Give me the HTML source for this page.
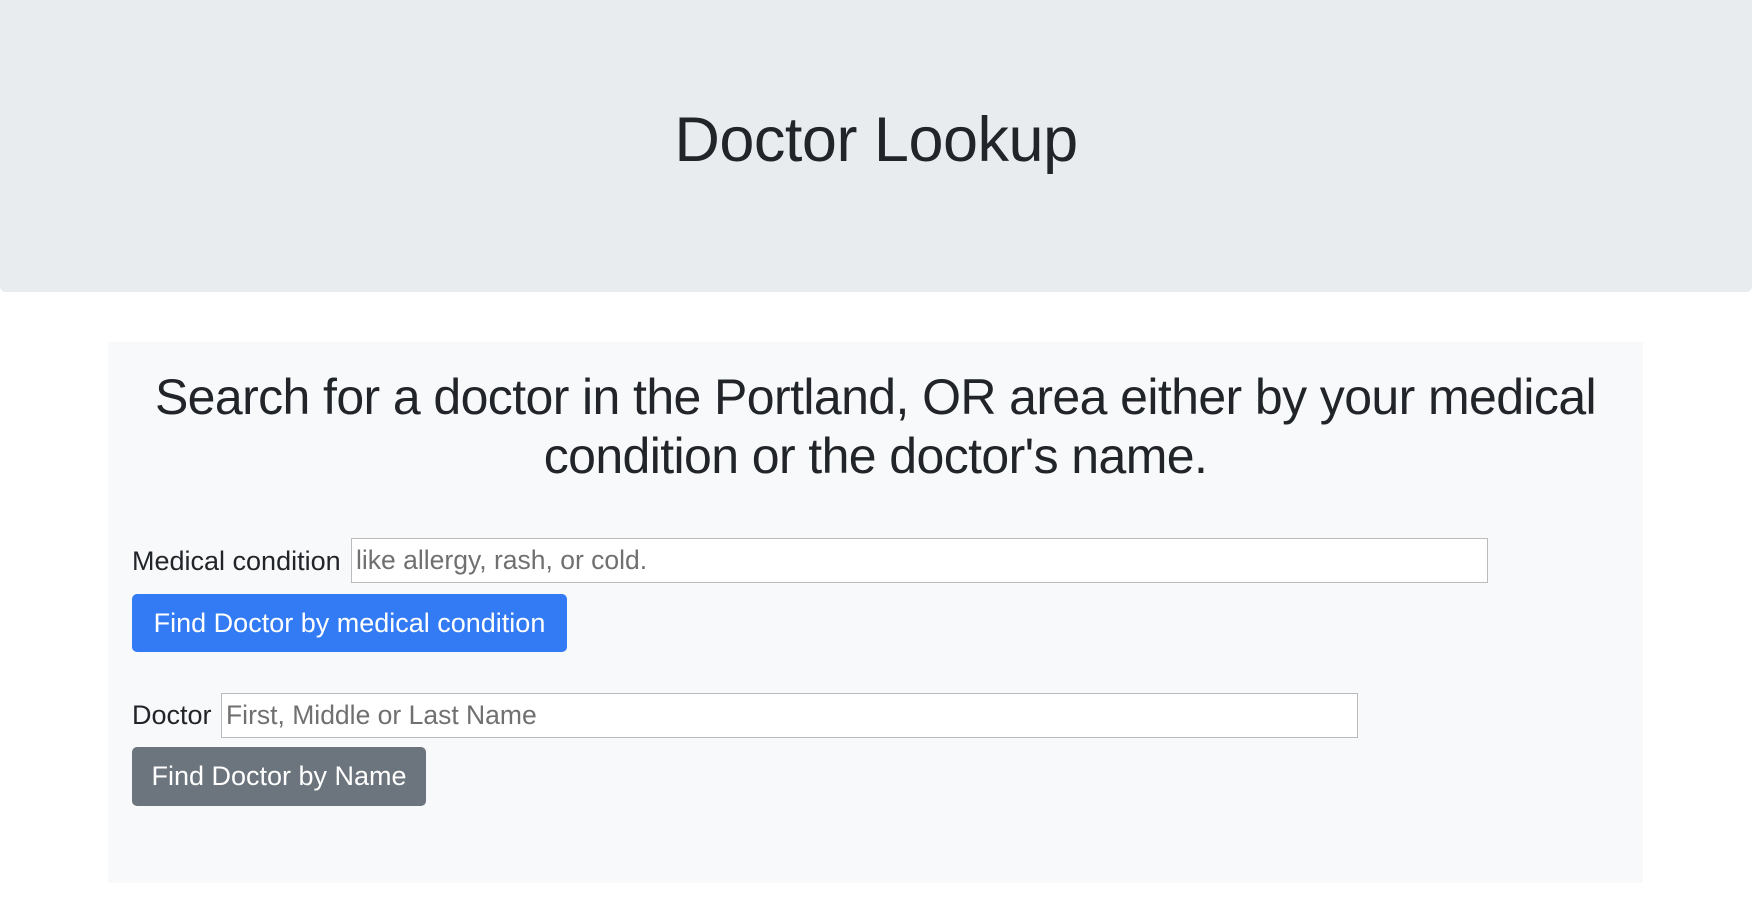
<!DOCTYPE html>
<html><head><meta charset="utf-8"><style>
body{margin:0;width:1752px;height:920px;background:#fff;font-family:"Liberation Sans",sans-serif;color:#212529;position:relative;overflow:hidden}
.hdr{position:absolute;left:0;top:0;width:1752px;height:292px;background:#e9ecef;border-radius:0 0 6px 6px}
.hdr h1{margin:0;position:absolute;width:100%;top:100px;text-align:center;font-weight:300;font-size:63px;line-height:80px;letter-spacing:-0.5px}
.box{position:absolute;left:108px;top:342px;width:1535px;height:541px;background:#f8f9fa}
.h2{position:absolute;left:108px;width:1535px;top:368px;text-align:center;font-size:50px;line-height:59px;font-weight:400;letter-spacing:-0.6px}
.lbl{position:absolute;left:132px;font-size:27px;line-height:30px}
.inp{position:absolute;border:1px solid #bbb;background:#fff;box-sizing:border-box;color:#707070;font-size:26.5px;line-height:43px;padding-left:4px}
.btn{position:absolute;left:132px;color:#fff;border-radius:5px;font-size:27px;text-align:center;box-sizing:border-box}
</style></head><body>
<div class="hdr"><h1>Doctor Lookup</h1></div>
<div class="box"></div>
<div class="h2">Search for a doctor in the Portland, OR area either by your medical<br>condition or the doctor's name.</div>
<div class="lbl" style="top:546px">Medical condition</div>
<div class="inp" style="left:351px;top:538px;width:1137px;height:45px">like allergy, rash, or cold.</div>
<div class="btn" style="top:594px;width:435px;height:58px;line-height:58px;background:#337bf5">Find Doctor by medical condition</div>
<div class="lbl" style="top:700px">Doctor</div>
<div class="inp" style="left:221px;top:693px;width:1137px;height:45px">First, Middle or Last Name</div>
<div class="btn" style="top:747px;width:294px;height:59px;line-height:59px;background:#6c757d">Find Doctor by Name</div>
</body></html>
